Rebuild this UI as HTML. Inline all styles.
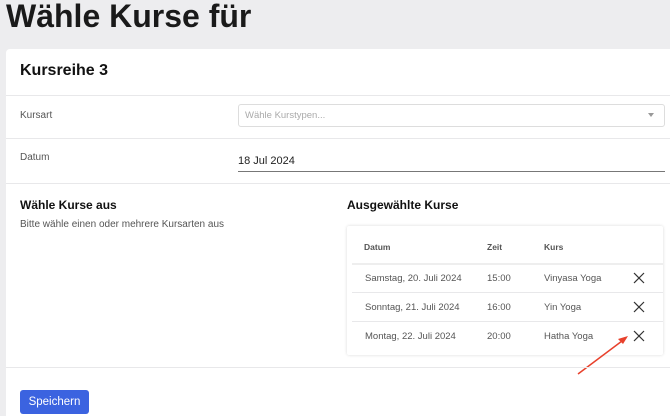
<!DOCTYPE html><html style="height:416px;overflow:hidden"><head><meta charset="utf-8"><style>
body{margin:0;width:670px;height:416px;background:#ededef;font-family:"Liberation Sans",sans-serif;position:relative;overflow:hidden;color:#222}
.a{position:absolute;white-space:nowrap}
.card{position:absolute;left:6px;top:49px;width:680px;height:367px;background:#fff;border-radius:4px 4px 0 0}
.hl{position:absolute;height:1px;background:#e8e8ea}
.lbl{font-size:10px;color:#555}
.td{font-size:9.5px;color:#555}
.th{font-size:8.5px;color:#555;font-weight:bold}
.x{position:absolute;width:12px;height:12px}
</style></head><body>
<div class="a" style="left:6px;top:-2px;font-size:32px;font-weight:bold;color:#1a1a1a">Wähle Kurse für</div>
<div class="card"></div>
<div class="a" style="left:20px;top:62px;font-size:16px;font-weight:bold;color:#111">Kursreihe 3</div>
<div class="hl" style="left:6px;top:95px;width:664px"></div>
<div class="a lbl" style="left:20px;top:110px">Kursart</div>
<div class="a" style="left:238px;top:104px;width:425px;height:21px;border:1px solid #ddd;border-radius:3px"></div>
<div class="a" style="left:245px;top:110px;font-size:9.5px;color:#aaa">Wähle Kurstypen...</div>
<div class="a" style="left:648px;top:113px;width:0;height:0;border-left:3px solid transparent;border-right:3px solid transparent;border-top:4px solid #999"></div>
<div class="hl" style="left:6px;top:138px;width:664px"></div>
<div class="a lbl" style="left:20px;top:152px">Datum</div>
<div class="a" style="left:238px;top:155px;font-size:11px;color:#222">18 Jul 2024</div>
<div class="a" style="left:238px;top:171px;width:427px;height:1px;background:#777"></div>
<div class="hl" style="left:6px;top:183px;width:664px"></div>
<div class="a" style="left:20px;top:198px;font-size:12px;font-weight:bold;color:#111">Wähle Kurse aus</div>
<div class="a lbl" style="left:20px;top:219px">Bitte wähle einen oder mehrere Kursarten aus</div>
<div class="a" style="left:347px;top:198px;font-size:12px;font-weight:bold;color:#111">Ausgewählte Kurse</div>
<div class="a" style="left:347px;top:226px;width:316px;height:129px;background:#fff;box-shadow:0 0 3px rgba(0,0,0,0.15);border-radius:2px"></div>
<div class="a th" style="left:364px;top:242px">Datum</div>
<div class="a th" style="left:487px;top:242px">Zeit</div>
<div class="a th" style="left:544px;top:242px">Kurs</div>
<div class="hl" style="left:352px;top:263px;width:311px;height:2px;background:#eee"></div>
<div class="hl" style="left:352px;top:292px;width:311px"></div>
<div class="hl" style="left:352px;top:321px;width:311px"></div>
<div class="a td" style="left:365px;top:273px">Samstag, 20. Juli 2024</div>
<div class="a td" style="left:487px;top:273px">15:00</div>
<div class="a td" style="left:544px;top:273px">Vinyasa Yoga</div>
<div class="a td" style="left:365px;top:302px">Sonntag, 21. Juli 2024</div>
<div class="a td" style="left:487px;top:302px">16:00</div>
<div class="a td" style="left:544px;top:302px">Yin Yoga</div>
<div class="a td" style="left:365px;top:331px">Montag, 22. Juli 2024</div>
<div class="a td" style="left:487px;top:331px">20:00</div>
<div class="a td" style="left:544px;top:331px">Hatha Yoga</div>
<svg class="x" style="left:633px;top:272px" viewBox="0 0 12 12"><path d="M1 1L11 11M11 1L1 11" stroke="#333" stroke-width="1.2"/></svg>
<svg class="x" style="left:633px;top:301px" viewBox="0 0 12 12"><path d="M1 1L11 11M11 1L1 11" stroke="#333" stroke-width="1.2"/></svg>
<svg class="x" style="left:633px;top:330px" viewBox="0 0 12 12"><path d="M1 1L11 11M11 1L1 11" stroke="#333" stroke-width="1.2"/></svg>
<svg class="a" style="left:570px;top:330px" width="60" height="50" viewBox="0 0 60 50"><path d="M8 44L56 8" stroke="#e8412c" stroke-width="1.5"/><path d="M58 6L48 9L53 14Z" fill="#e8412c"/></svg>
<div class="hl" style="left:6px;top:367px;width:664px"></div>
<div class="a" style="left:20px;top:390px;width:69px;height:24px;background:#3b63e0;border-radius:3px;color:#fff;font-size:11.5px;text-align:center;line-height:24px">Speichern</div>
</body></html>
